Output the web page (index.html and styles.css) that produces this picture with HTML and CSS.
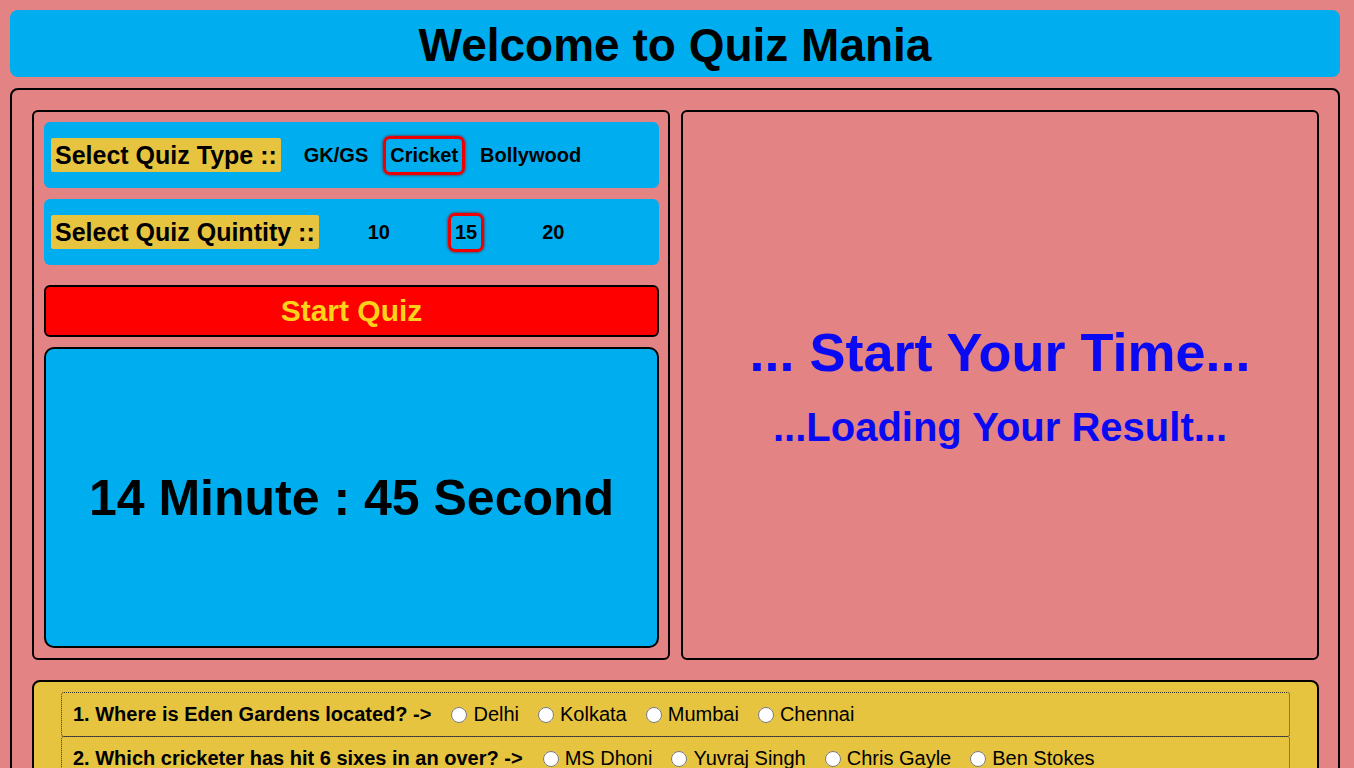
FILE: index.html
```html
<!DOCTYPE html>
<html lang="en">
<head>
<meta charset="utf-8">
<title>Quiz Mania</title>
<link rel="stylesheet" href="styles.css">
</head>
<body>
<header class="header"><h1 class="title">Welcome to Quiz Mania</h1></header>
<main class="main">
  <div class="panels">
    <section class="panel left">
      <div class="select-row type-row">
        <span class="select-label">Select Quiz Type ::</span>
        <span class="opt">GK/GS</span>
        <span class="opt selected">Cricket</span>
        <span class="opt">Bollywood</span>
      </div>
      <div class="select-row qty-row">
        <span class="select-label">Select Quiz Quintity ::</span>
        <span class="opt">10</span>
        <span class="opt selected">15</span>
        <span class="opt">20</span>
      </div>
      <button class="start-btn">Start Quiz</button>
      <div class="timer">14 Minute : 45 Second</div>
    </section>
    <section class="panel right">
      <h2 class="start-time">... Start Your Time...</h2>
      <h3 class="loading">...Loading Your Result...</h3>
    </section>
  </div>
  <section class="quiz">
    <div class="question">
      <span class="q-text">1. Where is Eden Gardens located? -&gt;</span>
      <label class="choice"><input type="radio" name="q1"><span>Delhi</span></label>
      <label class="choice"><input type="radio" name="q1"><span>Kolkata</span></label>
      <label class="choice"><input type="radio" name="q1"><span>Mumbai</span></label>
      <label class="choice"><input type="radio" name="q1"><span>Chennai</span></label>
    </div>
    <div class="question">
      <span class="q-text">2. Which cricketer has hit 6 sixes in an over? -&gt;</span>
      <label class="choice"><input type="radio" name="q2"><span>MS Dhoni</span></label>
      <label class="choice"><input type="radio" name="q2"><span>Yuvraj Singh</span></label>
      <label class="choice"><input type="radio" name="q2"><span>Chris Gayle</span></label>
      <label class="choice"><input type="radio" name="q2"><span>Ben Stokes</span></label>
    </div>
    <div class="question">
      <span class="q-text">3. Who is known as the God of Cricket? -&gt;</span>
      <label class="choice"><input type="radio" name="q3"><span>Virat Kohli</span></label>
      <label class="choice"><input type="radio" name="q3"><span>Sachin Tendulkar</span></label>
      <label class="choice"><input type="radio" name="q3"><span>Kapil Dev</span></label>
      <label class="choice"><input type="radio" name="q3"><span>Rahul Dravid</span></label>
    </div>
  </section>
</main>
</body>
</html>
```
FILE: styles.css
```css
* { box-sizing: border-box; }
html, body { background: #e38383; }
body {
  margin: 10px 14px 10px 10px;
  font-family: "Liberation Sans", Arial, sans-serif;
  color: #000;
}
.header {
  background: #00aeef;
  border-radius: 8px;
  height: 67px;
  display: flex;
  align-items: center;
  justify-content: center;
}
.title {
  margin: 0;
  font-size: 46px;
  font-weight: bold;
  line-height: 1;
  padding-top: 2px;
}
.main {
  margin-top: 11px;
  border: 2px solid #000;
  border-radius: 8px;
  padding: 20px 19px 20px 20px;
}
.panels {
  display: grid;
  grid-template-columns: 1fr 1fr;
  gap: 11px;
}
.panel {
  border: 2px solid #000;
  border-radius: 6px;
  height: 550px;
  min-width: 0;
}
.left {
  padding: 10px 9px 10px 10px;
  display: flex;
  flex-direction: column;
}
.select-row {
  background: #00aeef;
  border-radius: 6px;
  height: 66px;
  display: flex;
  align-items: center;
  padding-left: 7px;
}
.qty-row { margin-top: 11px; }
.select-label {
  background: #e6c440;
  font-size: 25px;
  font-weight: bold;
  line-height: 28px;
  padding: 3px 4px;
  border-radius: 2px;
}
.opt {
  font-size: 20px;
  font-weight: bold;
  line-height: 23px;
  padding: 5px 4px;
  border: 3px solid transparent;
  border-radius: 7px;
}
.opt.selected {
  border-color: #ee0000;
  box-shadow: 0 0 3px #8a0000;
}
.type-row .opt { margin-left: 8px; }
.type-row .select-label + .opt { margin-left: 16px; }
.qty-row .opt { margin-left: 51px; }
.qty-row .select-label + .opt { margin-left: 42px; }
.start-btn {
  margin-top: 20px;
  height: 52px;
  background: #ff0000;
  border: 2px solid #000;
  border-radius: 6px;
  color: #ffd21a;
  font-family: "Liberation Sans", Arial, sans-serif;
  font-size: 30px;
  font-weight: bold;
  padding: 0;
}
.timer {
  margin-top: 10px;
  flex: 1;
  background: #00aeef;
  border: 2px solid #000;
  border-radius: 10px;
  display: flex;
  align-items: center;
  justify-content: center;
  font-size: 50px;
  font-weight: bold;
}
.right {
  display: flex;
  flex-direction: column;
  align-items: center;
  padding-top: 210px;
  color: #0a0af2;
}
.start-time {
  margin: 0;
  font-size: 54px;
  line-height: 60px;
  font-weight: bold;
}
.loading {
  margin: 22px 0 0;
  font-size: 40px;
  line-height: 46px;
  font-weight: bold;
}
.quiz {
  margin-top: 20px;
  background: #e6c440;
  border: 2px solid #000;
  border-radius: 8px;
  padding: 10px 27px 10px 27px;
}
.question {
  border: 1px dotted #333;
  border-radius: 3px;
  height: 45px;
  display: flex;
  align-items: center;
  padding-left: 11px;
  font-size: 20px;
  margin-top: -1px;
}
.question:first-child { margin-top: 0; }
.q-text { font-weight: bold; margin-right: 20px; }
.choice {
  display: flex;
  align-items: center;
  margin-right: 19px;
}
.choice input {
  width: 16px;
  height: 16px;
  margin: 0 6px 0 0;
}
```
